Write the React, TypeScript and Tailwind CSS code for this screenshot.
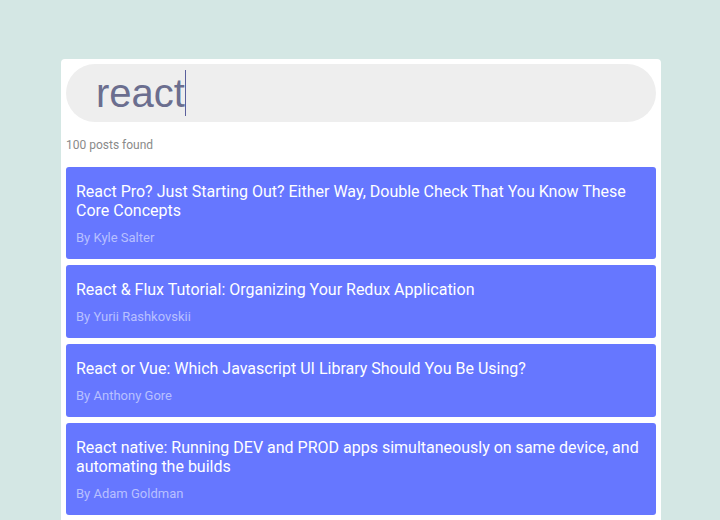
const posts = [
  {
    title: 'React Pro? Just Starting Out? Either Way, Double Check That You Know These Core Concepts',
    author: 'Kyle Salter',
  },
  { title: 'React & Flux Tutorial: Organizing Your Redux Application', author: 'Yurii Rashkovskii' },
  { title: 'React or Vue: Which Javascript UI Library Should You Be Using?', author: 'Anthony Gore' },
  {
    title: 'React native: Running DEV and PROD apps simultaneously on same device, and automating the builds',
    author: 'Adam Goldman',
  },
];

export default function App() {
  return (
    <div className="h-[520px] overflow-hidden bg-[#d4e7e4] pt-[59px] font-['Roboto',sans-serif]">
      <div className="ml-[61px] w-[600px] min-h-[470px] rounded-[4px] bg-white p-[5px]">
        {/* search box */}
        <div className="flex h-[58px] items-center rounded-full bg-[#eeeeee] pl-[30px]">
          <span className="font-['Liberation_Sans',Arial,sans-serif] text-[40px] leading-none text-[#6b6e8f]">
            react
          </span>
          <span className="h-[46px] w-px bg-[#5a5f9c]" />
        </div>

        <p className="mt-4 mb-[15px] text-[12px] leading-[14px] text-[#8a8a8a]">100 posts found</p>

        <div className="flex flex-col gap-[6px]">
          {posts.map((post) => (
            <div key={post.title} className="rounded-[3px] bg-[#6677ff] px-[10px] pt-[15px] pb-[14px]">
              <h3 className="mb-[10px] text-[16px] leading-[19px] text-white">{post.title}</h3>
              <div className="text-[13px] leading-[15px] text-[#b8c0ff]">By {post.author}</div>
            </div>
          ))}
        </div>
      </div>
    </div>
  );
}
